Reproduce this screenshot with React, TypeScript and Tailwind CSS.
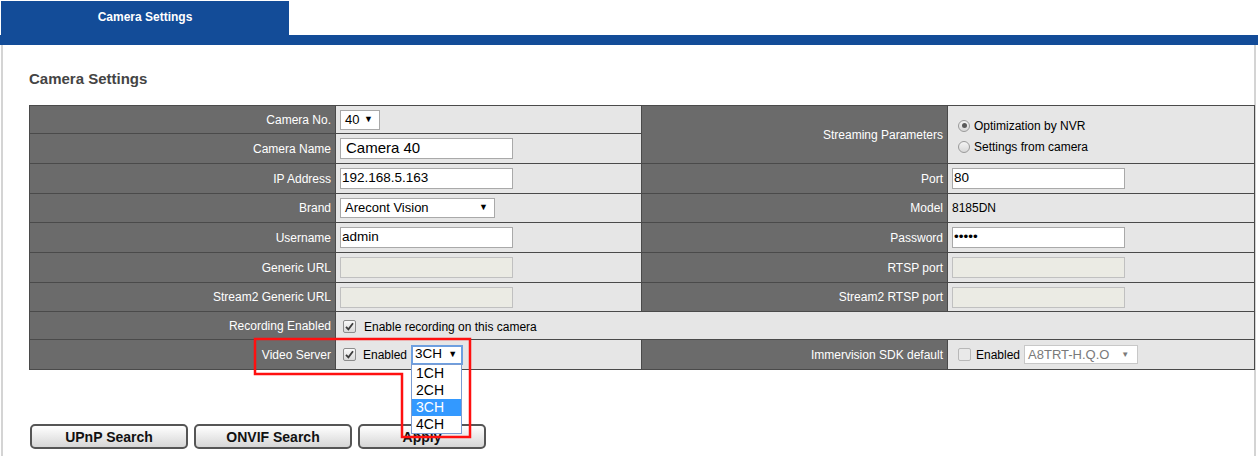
import React from 'react';

const font = { fontFamily: '"Liberation Sans", Arial, sans-serif' };

function Label({ children, className = '' }: { children: React.ReactNode; className?: string }) {
  return (
    <div className={`bg-[#6b6b6b] text-white text-[12px] flex items-center justify-end pr-[4px] ${className}`}>
      {children}
    </div>
  );
}

function Value({ children, className = '' }: { children?: React.ReactNode; className?: string }) {
  return (
    <div className={`bg-[#e6e6e6] text-black text-[12px] flex items-center pl-[4px] ${className}`}>
      {children}
    </div>
  );
}

function TextBox({ value, big = false, w = 'w-[173px]' }: { value?: string; big?: boolean; w?: string }) {
  return (
    <div
      className={`${w} h-[21px] bg-white border border-[#a9a9a9] flex items-center ${
        big ? 'text-[15px] pl-[5px]' : 'text-[13.5px] pl-[1px]'
      } text-black`}
    >
      {value}
    </div>
  );
}

function Disabled() {
  return <div className="w-[173px] h-[21px] bg-[#ebebe4] border border-[#c0c0c0]" />;
}

function Select({ value, w, focused = false }: { value: string; w: string; focused?: boolean }) {
  return (
    <div
      className={`${w} h-[20px] bg-white flex items-center justify-between ${
        focused
          ? 'border-2 border-[#6d9fe0] text-[13.5px] pl-[2px] pr-[4px]'
          : 'border border-[#a9a9a9] text-[13px] pl-[4px] pr-[6px]'
      }`}
    >
      <span>{value}</span>
      <span className="text-[9px]">▼</span>
    </div>
  );
}

function Check({ checked = true, disabled = false }: { checked?: boolean; disabled?: boolean }) {
  return (
    <span
      className={`w-[13px] h-[13px] rounded-[2px] border flex items-center justify-center ${
        disabled ? 'border-[#b8b8b8] bg-[#e9e9e9]' : 'border-[#8c8c8c] bg-gradient-to-b from-[#fafafa] to-[#d9d9d9]'
      }`}
    >
      {checked && (
        <svg width="9" height="9" viewBox="0 0 9 9">
          <path d="M1 4.8 L3.4 7.3 L8 1.2" fill="none" stroke="#3c3c3c" strokeWidth="1.8" />
        </svg>
      )}
    </span>
  );
}

function Radio({ on }: { on: boolean }) {
  return (
    <span className="w-[12px] h-[12px] rounded-full border border-[#9a9a9a] bg-gradient-to-b from-[#f4f4f4] to-[#d8d8d8] flex items-center justify-center">
      {on && <span className="w-[5px] h-[5px] rounded-full bg-[#5a5a5a]" />}
    </span>
  );
}

function Button({ children, w }: { children: React.ReactNode; w: string }) {
  return (
    <div
      className={`${w} h-[25px] rounded-[5px] border-2 border-[#555] bg-gradient-to-b from-white to-[#d6d6d6] flex items-center justify-center text-[14px] font-bold text-[#111] pt-[1px]`}
    >
      {children}
    </div>
  );
}

export default function App() {
  return (
    <div className="relative w-[1258px] h-[456px] bg-white overflow-hidden" style={font}>
      {/* header tab */}
      <div className="flex h-[35px] pt-[1px] pl-[1px]">
        <div className="w-[288px] bg-[#134c98] text-white text-[12px] font-bold flex items-center justify-center pb-[2px]">
          Camera Settings
        </div>
      </div>
      <div className="h-[10px] bg-[#134c98]" />

      <div className="ml-[1px] mr-[2px] h-[411px] border-l-2 border-r-2 border-[#d4d4d4] pl-[26px] pt-[25px]">
        <h1 className="text-[15px] font-bold text-[#444] leading-[18px] mb-[17px]">Camera Settings</h1>

        <div className="w-[1226px] bg-[#4a4a4a] p-px gap-px grid grid-cols-[305px_305px_305px_306px] grid-rows-[27px_29px_29px_28px_29px_29px_28px_27px_29px]">
          <Label>Camera No.</Label>
          <Value>
            <Select value="40" w="w-[40px]" />
          </Value>
          <Label className="row-span-2">Streaming Parameters</Label>
          <div className="row-span-2 bg-[#e6e6e6] text-[12px] flex flex-col justify-center gap-[3px] pl-[10px] pt-[3px]">
            <div className="flex items-center gap-[4px]">
              <Radio on />
              <span>Optimization by NVR</span>
            </div>
            <div className="flex items-center gap-[4px]">
              <Radio on={false} />
              <span>Settings from camera</span>
            </div>
          </div>

          <Label>Camera Name</Label>
          <Value>
            <TextBox value="Camera 40" big />
          </Value>

          <Label>IP Address</Label>
          <Value>
            <TextBox value="192.168.5.163" />
          </Value>
          <Label>Port</Label>
          <Value>
            <TextBox value="80" />
          </Value>

          <Label>Brand</Label>
          <Value>
            <Select value="Arecont Vision" w="w-[155px]" />
          </Value>
          <Label>Model</Label>
          <Value className="text-[12px]">8185DN</Value>

          <Label>Username</Label>
          <Value>
            <TextBox value="admin" />
          </Value>
          <Label>Password</Label>
          <Value>
            <TextBox value="•••••" w="w-[173px] text-[9px]" />
          </Value>

          <Label>Generic URL</Label>
          <Value>
            <Disabled />
          </Value>
          <Label>RTSP port</Label>
          <Value>
            <Disabled />
          </Value>

          <Label>Stream2 Generic URL</Label>
          <Value>
            <Disabled />
          </Value>
          <Label>Stream2 RTSP port</Label>
          <Value>
            <Disabled />
          </Value>

          <Label>Recording Enabled</Label>
          <Value className="col-span-3 pl-[7px] gap-[8px] pt-[2px]">
            <Check />
            <span>Enable recording on this camera</span>
          </Value>

          <Label>Video Server</Label>
          <Value className="pl-[7px] gap-[8px]">
            <Check />
            <span className="-ml-[1px]">Enabled</span>
            <div className="-ml-[4px]">
              <Select value="3CH" w="w-[52px]" focused />
            </div>
          </Value>
          <Label>Immervision SDK default</Label>
          <Value className="pl-[10px] gap-[5px]">
            <Check checked={false} disabled />
            <span>Enabled</span>
            <div className="-ml-[1px] w-[114px] h-[19px] border border-[#c8c8c8] bg-white text-[#7a7a7a] text-[13px] flex items-center justify-between pl-[3px] pr-[8px]">
              <span>A8TRT-H.Q.O</span>
              <span className="text-[8px]">▼</span>
            </div>
          </Value>
        </div>

        <div className="flex gap-[6px] mt-[54px] ml-[1px]">
          <Button w="w-[158px]">UPnP Search</Button>
          <Button w="w-[158px]">ONVIF Search</Button>
          <Button w="w-[128px]">Apply</Button>
        </div>
      </div>

      {/* open dropdown list */}
      <div className="absolute left-[411px] top-[364px] w-[51px] border border-[#7a9cd3] bg-white text-[14px] leading-[17px] text-black">
        <div className="pl-[4px]">1CH</div>
        <div className="pl-[4px]">2CH</div>
        <div className="pl-[4px] bg-[#3399ff] text-white">3CH</div>
        <div className="pl-[4px]">4CH</div>
      </div>

      {/* red annotation outline */}
      <svg className="absolute left-0 top-0 pointer-events-none" width="1258" height="456">
        <polygon
          points="255,339 470,339 470,437 402,437 402,374 255,374"
          fill="none"
          stroke="#ff1010"
          strokeWidth="2.5"
        />
      </svg>
    </div>
  );
}
